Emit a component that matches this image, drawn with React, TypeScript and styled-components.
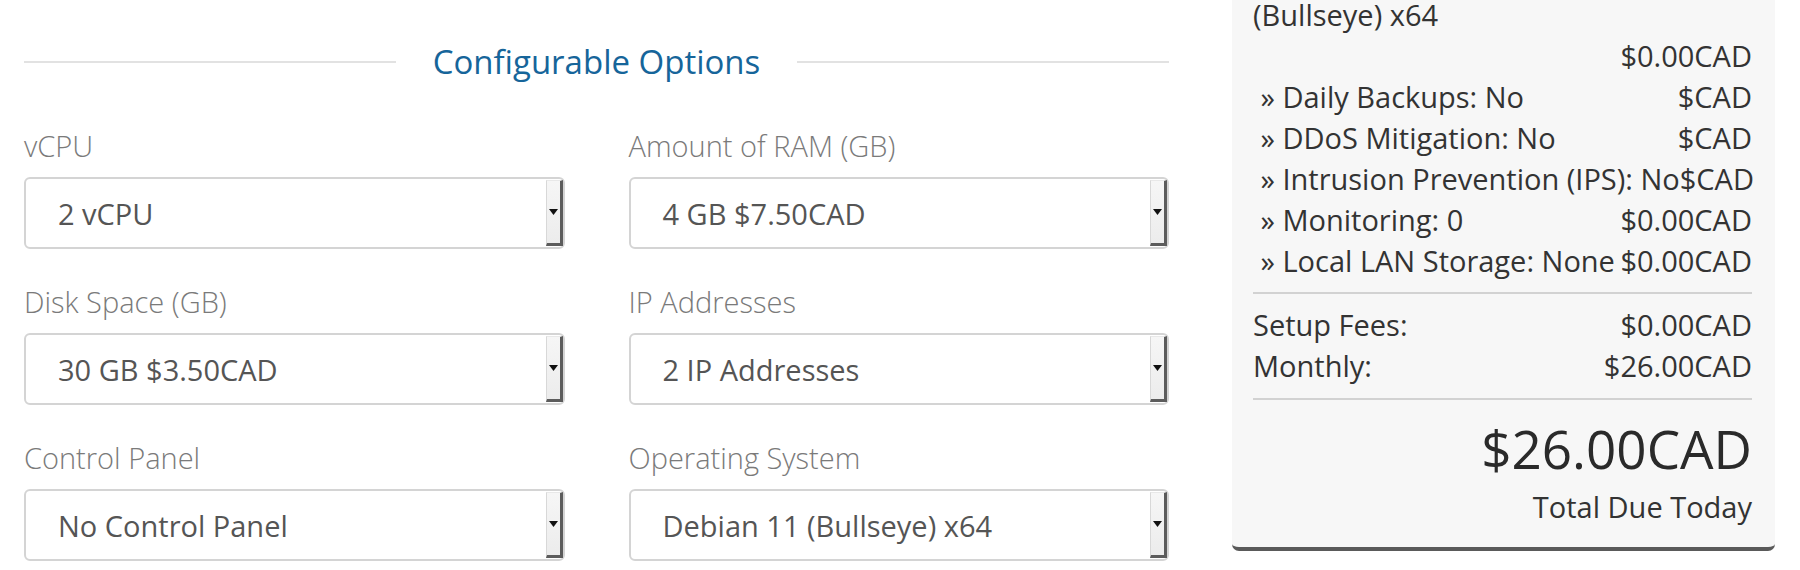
import styled, { createGlobalStyle } from 'styled-components';

const GlobalStyle = createGlobalStyle`
  html, body {
    margin: 0;
    padding: 0;
    background: #ffffff;
    overflow: hidden;
  }
  body {
    font-family: "Open Sans", "DejaVu Sans", sans-serif;
    color: #333333;
  }
`;

const Page = styled.div`
  display: flex;
  align-items: flex-start;
  gap: 63px;
  padding-left: 24px;
  height: 570px;
`;
const Options = styled.div`
  width: 1145px;
  padding-top: 39px;
`;
const SubHeading = styled.div`
  display: flex;
  align-items: center;
  gap: 37px;
  margin-bottom: 40px;
`;
const Rule = styled.div`
  flex: 1;
  height: 2px;
  background-color: #e2e2e2;
`;
const HeadingText = styled.span`
  font-size: 33px;
  line-height: 46px;
  color: #16659a;
`;
const Grid = styled.div`
  display: grid;
  grid-template-columns: 1fr 1fr;
  column-gap: 64px;
`;
const Field = styled.div`
  margin-bottom: 32px;
`;
const Label = styled.div`
  font-size: 29px;
  line-height: 41px;
  font-weight: 300;
  color: #7a7a7a;
  margin-bottom: 11px;
`;
const SelectBox = styled.div`
  height: 72px;
  box-sizing: border-box;
  border: 2px solid #d4d4d4;
  border-radius: 6px;
  display: flex;
  align-items: stretch;
  padding: 1px 0 1px 32px;
  background: #ffffff;
`;
const Value = styled.div`
  flex: 1;
  display: flex;
  align-items: center;
  font-size: 29px;
  color: #555555;
`;
const ArrowButton = styled.div`
  width: 17px;
  box-sizing: border-box;
  background: linear-gradient(#f6f6f6, #ececec);
  border-left: 1px solid #d8d8d8;
  border-right: 3px solid #5c5c5c;
  border-bottom: 3px solid #5c5c5c;
  border-top: 1px solid #e8e8e8;
  display: flex;
  align-items: center;
  justify-content: center;
`;

const Summary = styled.div`
  width: 543px;
  box-sizing: border-box;
  margin-top: -47px;
  padding: 0 23px 20px 21px;
  background-color: #f7f7f7;
  border-bottom: 4px solid #5a5a5a;
  border-radius: 0 0 7px 7px;
  font-size: 29px;
  line-height: 41px;
  color: #333333;
`;
const Item = styled.div<{ $wrap?: boolean }>`
  display: flex;
  flex-wrap: ${(p) => (p.$wrap ? 'wrap' : 'nowrap')};
  justify-content: space-between;
`;
const ItemName = styled.span<{ $wrap?: boolean }>`
  white-space: ${(p) => (p.$wrap ? 'pre-wrap' : 'pre')};
`;
const Price = styled.span`
  margin-left: auto;
  white-space: nowrap;
`;
const Divider = styled.div<{ $top: number; $bottom: number }>`
  height: 2px;
  background-color: #d2d2d2;
  margin: ${(p) => `${p.$top}px 0 ${p.$bottom}px`};
`;
const TotalAmount = styled.div`
  text-align: right;
  font-size: 53px;
  line-height: 58px;
  color: #2a2a2a;
`;
const TotalLabel = styled.div`
  text-align: right;
  margin-top: 8px;
`;

const fields = [
  { label: 'vCPU', value: '2 vCPU' },
  { label: 'Amount of RAM (GB)', value: '4 GB $7.50CAD' },
  { label: 'Disk Space (GB)', value: '30 GB $3.50CAD' },
  { label: 'IP Addresses', value: '2 IP Addresses' },
  { label: 'Control Panel', value: 'No Control Panel' },
  { label: 'Operating System', value: 'Debian 11 (Bullseye) x64' },
];

// the first option wraps onto two lines, its price drops below it
const items = [
  { name: '\u00a0» Operating System: Debian 11 (Bullseye) x64', price: '$0.00CAD', wrap: true },
  { name: '\u00a0» Daily Backups: No', price: '$CAD' },
  { name: '\u00a0» DDoS Mitigation: No', price: '$CAD' },
  { name: '\u00a0» Intrusion Prevention (IPS): No', price: '$CAD' },
  { name: '\u00a0» Monitoring: 0', price: '$0.00CAD' },
  { name: '\u00a0» Local LAN Storage: None', price: '$0.00CAD' },
];

function Arrow() {
  return (
    <svg width="9" height="6" viewBox="0 0 9 6">
      <path d="M0 0h9L4.5 6z" fill="#111" />
    </svg>
  );
}

export default function App() {
  return (
    <>
      <GlobalStyle />
      <Page>
        <Options>
          <SubHeading>
            <Rule />
            <HeadingText>Configurable Options</HeadingText>
            <Rule />
          </SubHeading>
          <Grid>
            {fields.map((f) => (
              <Field key={f.label}>
                <Label>{f.label}</Label>
                <SelectBox>
                  <Value>{f.value}</Value>
                  <ArrowButton>
                    <Arrow />
                  </ArrowButton>
                </SelectBox>
              </Field>
            ))}
          </Grid>
        </Options>
        <Summary>
          {items.map((it) => (
            <Item key={it.name} $wrap={it.wrap}>
              <ItemName $wrap={it.wrap}>{it.name}</ItemName>
              <Price>{it.price}</Price>
            </Item>
          ))}
          <Divider $top={11} $bottom={10} />
          <Item>
            <span>Setup Fees:</span>
            <Price>$0.00CAD</Price>
          </Item>
          <Item>
            <span>Monthly:</span>
            <Price>$26.00CAD</Price>
          </Item>
          <Divider $top={12} $bottom={20} />
          <TotalAmount>$26.00CAD</TotalAmount>
          <TotalLabel>Total Due Today</TotalLabel>
        </Summary>
      </Page>
    </>
  );
}
